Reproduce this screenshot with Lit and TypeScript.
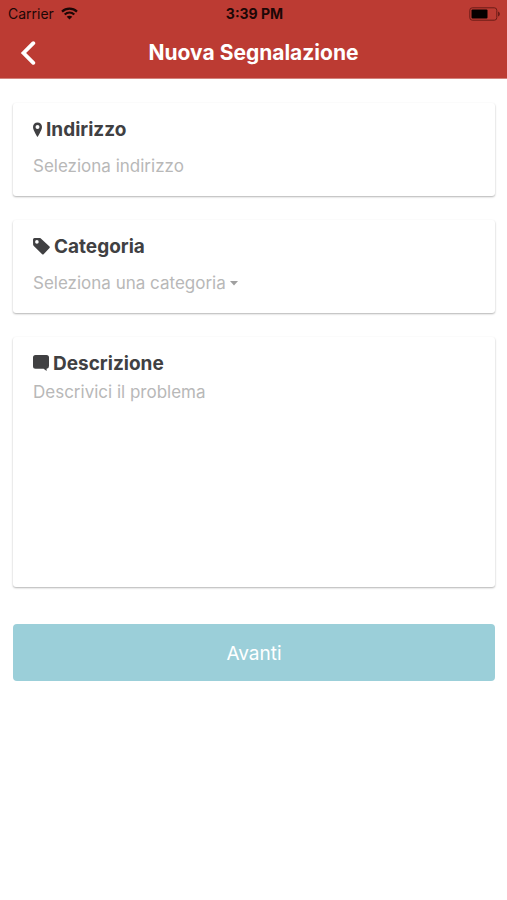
import { LitElement, html, css } from "lit";
import { customElement } from "lit/decorators.js";

@customElement("app-root")
export class AppRoot extends LitElement {
  static styles = css`
    :host {
      display: block;
      min-height: 100vh;
      background: #fff;
      font-family: Inter, "Liberation Sans", sans-serif;
      color: #404042;
    }
    * {
      box-sizing: border-box;
    }
    svg {
      display: block;
      flex: none;
    }
    .top {
      background: #bc3b33;
      border-bottom: 1px solid #d3827c;
    }
    .status,
    .nav {
      display: grid;
      grid-template-columns: 1fr auto 1fr;
      align-items: center;
    }
    .status {
      height: 27px;
      padding: 0 6px 0 8px;
      font-size: 14px;
      line-height: 20px;
      color: #1c0706;
    }
    .carrier {
      display: flex;
      align-items: center;
      gap: 7px;
    }
    .time {
      font-weight: 700;
    }
    .battery {
      justify-self: end;
    }
    .nav {
      height: 51px;
      padding: 0 16px;
    }
    .back {
      justify-self: start;
      display: flex;
      padding: 0 4px;
      border: 0;
      background: none;
      color: #fff;
    }
    .title {
      margin: 0;
      font-size: 21px;
      line-height: 28px;
      font-weight: 700;
      color: #fff;
    }
    .form {
      display: flex;
      flex-direction: column;
      gap: 24px;
      padding: 24px 12px 24px 13px;
    }
    .card {
      display: flex;
      flex-direction: column;
      gap: 12px;
      height: 93px;
      padding: 15px 20px 12px;
      border-radius: 3px;
      background: #fff;
      box-shadow: 0 1px 2px rgba(0, 0, 0, 0.3);
    }
    .card.tall {
      gap: 4px;
      height: 250px;
    }
    .label {
      display: flex;
      align-items: center;
      gap: 4px;
      font-size: 19px;
      line-height: 24px;
      font-weight: 700;
    }
    .field {
      display: block;
      width: 100%;
      margin: 0;
      padding: 0;
      border: 0;
      outline: 0;
      background: none;
      appearance: none;
      resize: none;
      font: inherit;
      font-size: 17px;
      line-height: 24px;
      color: #b8b8b8;
    }
    .field::placeholder {
      color: #b8b8b8;
      opacity: 1;
    }
    .picker {
      display: flex;
      align-items: center;
      gap: 4px;
      color: #b8b8b8;
    }
    .picker svg {
      color: #a0a0a0;
    }
    .picker .field {
      width: auto;
    }
    .tall .field {
      flex: 1;
    }
    .next {
      height: 57px;
      margin-top: 13px;
      padding: 2px 0 0;
      border: 0;
      border-radius: 4px;
      background: #9bcfd9;
      color: #fff;
      font: inherit;
      font-size: 19px;
      line-height: 24px;
    }
  `;

  render() {
    return html`
      <header class="top">
        <div class="status">
          <div class="carrier">
            <span>Carrier</span>
            <svg width="17" height="13" viewBox="0 0 17 13" fill="none" stroke="currentColor" stroke-width="2.2" aria-hidden="true">
              <path d="M1 4.600C5.200.700 11.800.700 16 4.600" />
              <path d="M3.700 7.500C6.500 5 10.500 5 13.300 7.500" />
              <path d="M8.500 12.500 5.700 9.700C7.300 8.300 9.700 8.300 11.300 9.700Z" fill="currentColor" stroke="none" />
            </svg>
          </div>
          <span class="time">3:39 PM</span>
          <svg class="battery" width="32" height="14" viewBox="0 0 32 14" aria-hidden="true">
            <rect x=".8" y=".8" width="27" height="12.400" rx="2.500" fill="none" stroke="#6b1c17" />
            <rect x="2.500" y="2.500" width="16" height="9" rx="1" fill="#050000" />
            <path d="M29 4.500C31.500 5.500 31.500 8.500 29 9.500Z" fill="#6b1c17" />
          </svg>
        </div>
        <div class="nav">
          <button class="back" aria-label="Indietro">
            <svg width="16" height="24" viewBox="0 0 16 24" fill="none" stroke="currentColor" stroke-width="3.800" stroke-linecap="round">
              <path d="M13.300 2.200 3.500 12 13.300 21.800" stroke-linejoin="miter" />
            </svg>
          </button>
          <h1 class="title">Nuova Segnalazione</h1>
        </div>
      </header>
      <form class="form" @submit=${(e: Event) => e.preventDefault()}>
        <div class="card">
          <label class="label" for="address">
            <svg width="9" height="16" viewBox="0 0 9 16" fill="currentColor" aria-hidden="true">
              <path fill-rule="evenodd" d="M4.500.500C1.900.500 0 2.500 0 5 0 8.300 4.500 15 4.500 15S9 8.300 9 5C9 2.500 7.100.500 4.500.500ZM4.500 3A2 2 0 1 1 4.500 7 2 2 0 1 1 4.500 3Z" />
            </svg>
            Indirizzo
          </label>
          <input class="field" id="address" type="text" placeholder="Seleziona indirizzo" />
        </div>
        <div class="card">
          <label class="label" for="category">
            <svg width="17" height="18" viewBox="0 0 17 18" fill="currentColor" aria-hidden="true">
              <path fill-rule="evenodd" d="M1.500 0 6.800.100Q7.700.200 8.400.900L16.500 8.600Q17.200 9.300 16.500 10L10.600 16.200Q9.900 16.900 9.200 16.200L.800 8.100Q.100 7.500.100 6.600L0 1.500Q0 0 1.500 0ZM3.900 2.100A1.800 1.800 0 1 0 3.900 5.700 1.800 1.800 0 1 0 3.900 2.100Z" />
            </svg>
            Categoria
          </label>
          <div class="picker">
            <select class="field" id="category">
              <option>Seleziona una categoria</option>
            </select>
            <svg width="8" height="5" viewBox="0 0 8 5" fill="currentColor" aria-hidden="true"><path d="M0 0H8L4 4.500Z" /></svg>
          </div>
        </div>
        <div class="card tall">
          <label class="label" for="description">
            <svg width="16" height="18" viewBox="0 0 16 18" fill="currentColor" aria-hidden="true">
              <path d="M2.500 0H13.500Q16 0 16 2.500V11Q16 13.500 13.600 13.700V16L10.600 13.700H2.500Q0 13.700 0 11.200V2.500Q0 0 2.500 0Z" />
            </svg>
            Descrizione
          </label>
          <textarea class="field" id="description" placeholder="Descrivici il problema"></textarea>
        </div>
        <button class="next">Avanti</button>
      </form>
    `;
  }
}
